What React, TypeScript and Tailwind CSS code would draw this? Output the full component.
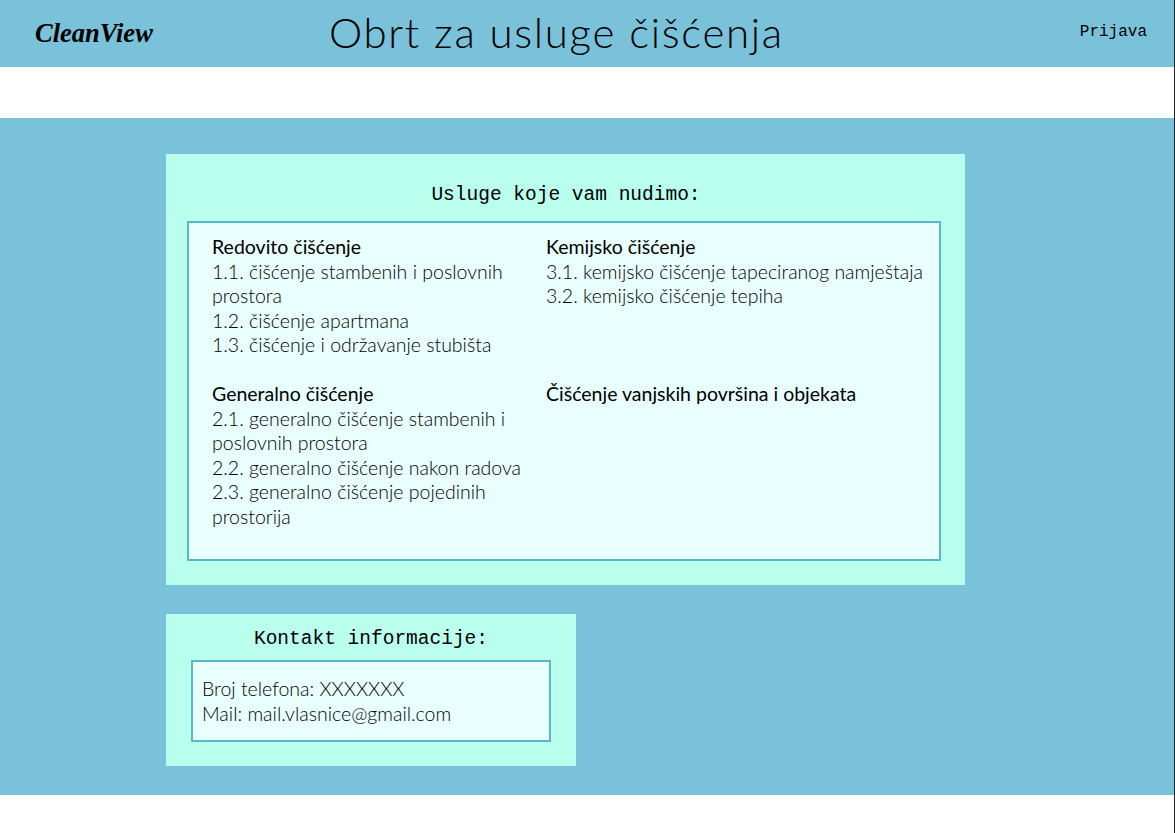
export default function App() {
  const body = "font-['Lato','Noto_Sans',sans-serif] font-light text-[19.5px] leading-[24.5px] text-black";
  const head = "font-normal";
  return (
    <div className="w-[1175px] h-[833px] bg-white flex flex-col border-r border-[#222] overflow-hidden">
      <header className="h-[67px] shrink-0 bg-[#7ac1da] flex items-center">
        <div className="w-[329px] pl-[35px] font-['Liberation_Serif',serif] italic font-bold text-[26.5px] text-black">CleanView</div>
        <h1 className="font-['Lato',sans-serif] font-light text-[42px] tracking-[1.7px] pb-[2px] text-black grow">Obrt za usluge čišćenja</h1>
        <div className="pr-[27px] pb-[4px] font-['Liberation_Mono',monospace] text-[16px] text-black">Prijava</div>
      </header>
      <div className="h-[51px] shrink-0" />
      <main className="h-[677px] shrink-0 bg-[#7ac1da] pt-[36px] pl-[166px] flex flex-col gap-[29px]">
        <section className="w-[799px] h-[431px] bg-[#baffee] pt-[30px] px-[21px] pr-[24px]">
          <h2 className="text-center pl-[4px] font-['Liberation_Mono',monospace] text-[19.5px] leading-[23px] text-black">Usluge koje vam nudimo:</h2>
          <div className={`mt-[14px] h-[340px] bg-[#e9fffd] border-2 border-[#55b9ca] pl-[23px] pt-[12px] grid grid-cols-[334px_1fr] grid-rows-[147px_1fr] ${body}`}>
            <div>
              <div className={head}>Redovito čišćenje</div>
              <div className="pr-[20px]">1.1. čišćenje stambenih i poslovnih prostora</div>
              <div>1.2. čišćenje apartmana</div>
              <div>1.3. čišćenje i održavanje stubišta</div>
            </div>
            <div>
              <div className={head}>Kemijsko čišćenje</div>
              <div>3.1. kemijsko čišćenje tapeciranog namještaja</div>
              <div>3.2. kemijsko čišćenje tepiha</div>
            </div>
            <div>
              <div className={head}>Generalno čišćenje</div>
              <div className="pr-[20px]">2.1. generalno čišćenje stambenih i poslovnih prostora</div>
              <div>2.2. generalno čišćenje nakon radova</div>
              <div className="pr-[20px]">2.3. generalno čišćenje pojedinih prostorija</div>
            </div>
            <div>
              <div className={head}>Čišćenje vanjskih površina i objekata</div>
            </div>
          </div>
        </section>
        <section className="w-[410px] h-[152px] bg-[#baffee] pt-[14px] px-[25px]">
          <h2 className="text-center font-['Liberation_Mono',monospace] text-[19.5px] leading-[23px] text-black">Kontakt informacije:</h2>
          <div className={`mt-[9px] h-[82px] bg-[#e9fffd] border-2 border-[#55b9ca] pl-[9px] pt-[15px] ${body}`}>
            <div>Broj telefona: XXXXXXX</div>
            <div>Mail: mail.vlasnice@gmail.com</div>
          </div>
        </section>
      </main>
    </div>
  );
}
